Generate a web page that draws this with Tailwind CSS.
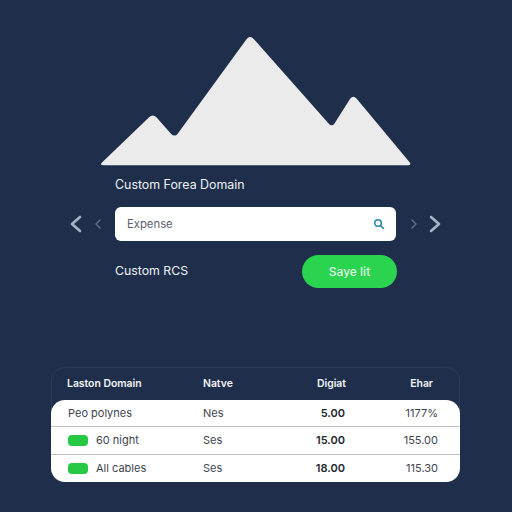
<!DOCTYPE html>
<html lang="en">
<head>
    <meta charset="UTF-8">
    <meta name="viewport" content="width=device-width, initial-scale=1.0">
    <title>Custom Domain</title>
    <script src="https://cdn.jsdelivr.net/npm/@tailwindcss/browser@4"></script>
</head>
<body class="w-[512px] h-[512px] overflow-hidden bg-[#1f2f4b] text-white font-['Inter','Liberation_Sans',sans-serif]">
    <main class="flex flex-col h-full">
        <!-- Mountain -->
        <svg class="block mt-[35px] ml-[99px] shrink-0" width="314" height="132" viewBox="99 35 314 132">
            <path d="M102 162.5 L149.1 117.3 Q152.7 113.8 156.4 117.3 L171 133.7 Q174.7 137.4 177.7 133.7 L246.3 39.4 Q250 34.7 253.9 39.2 L328.6 123.4 Q331.7 127.2 334.5 123.4 L350.3 98.6 Q353.3 94.8 356.5 98.6 L409.8 162.5 Q411.5 165.3 408 165.3 L103.5 165.3 Q99.5 165.3 102 162.5 Z" fill="#ebebeb"/>
        </svg>

        <!-- Search block -->
        <div class="pl-[115px] w-[397px] mt-[9px]">
            <p class="text-[12.4px] leading-[18px] text-[#eef1f5]">Custom Forea Domain</p>
        </div>
        <div class="flex items-center mt-[13px] pl-[68px]">
            <svg width="16" height="20" viewBox="0 0 16 20" fill="none" stroke="#a9b4c4" stroke-width="2.6" stroke-linecap="round" stroke-linejoin="round"><path d="M12 3 L4 10 L12 17"/></svg>
            <svg class="ml-[9px]" width="10" height="12" viewBox="0 0 10 12" fill="none" stroke="#626f85" stroke-width="1.4" stroke-linecap="round" stroke-linejoin="round"><path d="M7 2 L3 6 L7 10"/></svg>
            <div class="ml-[12px] w-[281px] h-[34px] bg-white rounded-[6px] flex items-center justify-between pl-[12px] pr-[11px]">
                <span class="text-[11.3px] text-[#5b6270]">Expense</span>
                <svg width="12" height="12" viewBox="0 0 12 12" fill="none" stroke="#2a86ad" stroke-width="1.6" stroke-linecap="round"><circle cx="5" cy="5" r="3.3"/><path d="M7.6 7.6 L10.5 10.5"/></svg>
            </div>
            <svg class="ml-[13px]" width="10" height="12" viewBox="0 0 10 12" fill="none" stroke="#626f85" stroke-width="1.4" stroke-linecap="round" stroke-linejoin="round"><path d="M3 2 L7 6 L3 10"/></svg>
            <svg class="ml-[8px]" width="16" height="20" viewBox="0 0 16 20" fill="none" stroke="#a9b4c4" stroke-width="2.6" stroke-linecap="round" stroke-linejoin="round"><path d="M4 3 L12 10 L4 17"/></svg>
        </div>
        <div class="flex items-center justify-between w-[282px] ml-[115px] mt-[14px]">
            <span class="text-[12.3px] text-[#eef1f5]">Custom RCS</span>
            <button class="w-[95px] h-[33px] rounded-full bg-[#2bd44f] text-[12px] font-medium text-[#dff7e4]">Saye lit</button>
        </div>

        <!-- Table card -->
        <section class="mt-[79px] ml-[51px] w-[409px] rounded-[14px] border border-[#2c3c58] border-b-0 text-[11px]">
            <div class="grid grid-cols-[136px_85px_73px_1fr] items-center h-[32px] text-[10.4px] font-semibold text-[#f1f3f6]">
                <span class="pl-[15px]">Laston Domain</span>
                <span class="pl-[15px]">Natve</span>
                <span class="text-right">Digiat</span>
                <span class="text-right pr-[26px]">Ehar</span>
            </div>
            <div class="-mx-px bg-white rounded-[14px] text-[#3e4450] divide-y divide-[#bfc2c6]">
                <div class="grid grid-cols-[136px_85px_73px_1fr] items-center h-[27px]">
                    <span class="pl-[17px]">Peo polynes</span>
                    <span class="pl-[16px]">Nes</span>
                    <span class="text-right font-semibold text-[#23272e]">5.00</span>
                    <span class="text-right pr-[22px]">1177%</span>
                </div>
                <div class="grid grid-cols-[136px_85px_73px_1fr] items-center h-[28px]">
                    <span class="pl-[17px] flex items-center gap-[8px]"><i class="w-[20px] h-[11px] rounded-[4px] bg-[#27c944]"></i>60 night</span>
                    <span class="pl-[16px]">Ses</span>
                    <span class="text-right font-semibold text-[#23272e]">15.00</span>
                    <span class="text-right pr-[22px]">155.00</span>
                </div>
                <div class="grid grid-cols-[136px_85px_73px_1fr] items-center h-[27px]">
                    <span class="pl-[17px] flex items-center gap-[8px]"><i class="w-[20px] h-[11px] rounded-[4px] bg-[#27c944]"></i>All cables</span>
                    <span class="pl-[16px]">Ses</span>
                    <span class="text-right font-semibold text-[#23272e]">18.00</span>
                    <span class="text-right pr-[22px]">115.30</span>
                </div>
            </div>
        </section>
    </main>
</body>
</html>
